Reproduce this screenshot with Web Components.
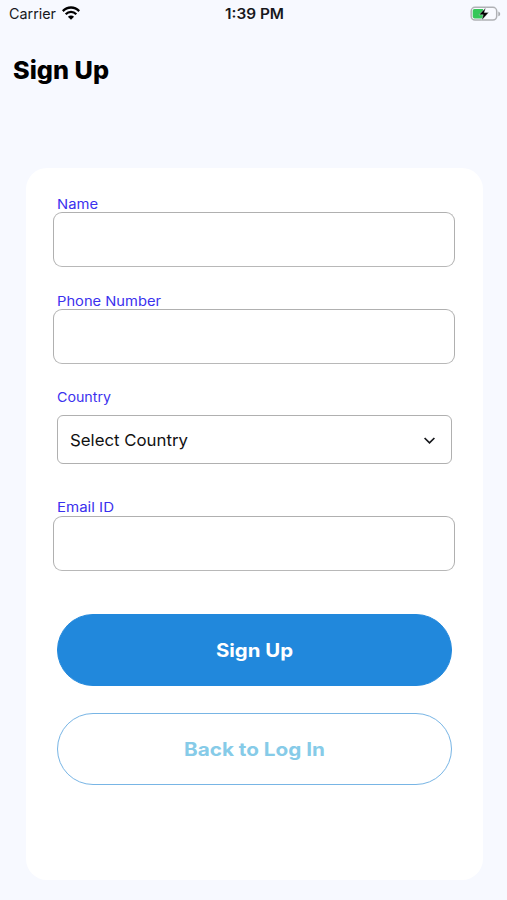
<!DOCTYPE html>
<html lang="en">
<head>
<meta charset="utf-8">
<title>Sign Up</title>
<style>
html, body { margin: 0; height: 100%; background: #f7f9ff; }
body { font-family: Inter, "Liberation Sans", sans-serif; color: #000; }
</style>
</head>
<body>
<signup-screen></signup-screen>
<script>
const define = (name, html, setup) => {
  const template = document.createElement('template');
  template.innerHTML = html;
  customElements.define(name, class extends HTMLElement {
    connectedCallback() {
      if (this.shadowRoot) return;
      this.attachShadow({ mode: 'open' }).append(template.content.cloneNode(true));
      if (setup) setup(this, this.shadowRoot);
    }
  });
};

// A text run stretched to the width given by its attribute.
define('fitted-text', `
<style>
:host { display: block; white-space: nowrap; }
span { display: inline-block; transform-origin: 0 50%; }
</style><span><slot></slot></span>`, (host, root) => {
  const span = root.querySelector('span');
  const target = Number(host.getAttribute('width'));
  host.style.width = target + 'px';
  span.style.transform = `scaleX(${(target / span.getBoundingClientRect().width).toFixed(4)})`;
});

define('status-bar', `
<style>
:host { display: grid; grid-template-columns: 1fr auto 1fr; align-items: center; height: 28px; padding: 0 6px 0 9px; box-sizing: border-box; font-size: 14.5px; line-height: 20px; color: #17181c; }
.left { display: flex; align-items: center; gap: 6px; }
.time { font-weight: 600; margin-left: -2px; }
.wifi { width: 18px; height: 14px; margin-top: -2px; }
.battery { justify-self: end; width: 31px; height: 16px; margin-top: -1px; }
svg { display: block; }
</style>
<div class="left"><fitted-text width="47">Carrier</fitted-text>
<svg class="wifi" viewBox="0 0 18 14"><g fill="none" stroke="#000" stroke-width="2.3"><path d="M.8 5.1C5.5.3 12.5.3 17.2 5.1"/><path d="M3.700 8.200c3-3 7.600-3 10.600 0"/></g><path d="M9 13.700 5.900 10.700c1.700-1.500 4.500-1.500 6.200 0z"/></svg></div>
<fitted-text class="time" width="59">1:39 PM</fitted-text>
<svg class="battery" viewBox="0 0 31 16"><rect x="1.200" y="1.300" width="25.500" height="12.800" rx="3.800" fill="#f9faff" stroke="#b0b1b5" stroke-width="1.500"/><path d="M28.300 5.400c2.500.7 2.500 4.200 0 4.900z" fill="#a9abaf"/><path d="M4.500 3H13v9.400H4.500Q2.700 12.400 2.700 10.600V4.800Q2.700 3 4.500 3z" fill="#35c759"/><path d="M15.700 1.800 9 8.800h4.200l-1.500 5.400 7-7.600h-4.400z" fill="#000" stroke="#f7f9ff" stroke-width=".4"/></svg>`);

define('field-label', `
<style>:host { display: block; height: 16px; font-size: 13px; line-height: 16px; color: #3b31ee; }</style><slot></slot>`);

define('text-box', `
<style>:host { display: block; box-sizing: border-box; height: 55px; margin: 0 -3px 0 -4px; border: 1px solid #b0b0b0; border-bottom-color: #b8b8b8; border-radius: 9px; background: #fff; }</style>`);

define('select-box', `
<style>
:host { display: flex; align-items: center; justify-content: space-between; box-sizing: border-box; height: 49px; border: 1px solid #b0b0b0; border-radius: 6px; padding: 0 15px 0 12px; font-size: 16.500px; line-height: 22px; color: #111; }
svg { display: block; width: 13px; height: 10px; margin-top: 3px; }
</style><slot></slot><svg viewBox="0 0 13 10"><path d="m1.600 2 4.900 4.900L11.400 2" fill="none" stroke="#17181c" stroke-width="1.700"/></svg>`);

define('pill-button', `
<style>
:host { display: flex; align-items: center; justify-content: center; box-sizing: border-box; height: 72px; border: 1px solid #78b5e5; border-radius: 36px; font-size: 18.500px; line-height: 24px; font-weight: 700; color: #86cbe8; }
:host([primary]) { background: #2188dc; border-color: #2188dc; color: #fff; }
</style><slot></slot>`);

define('form-card', `
<style>:host { display: block; box-sizing: border-box; width: 457px; height: 712px; margin: 76px 0 0 26px; padding: 28px 31px 0; border-radius: 21px; background: #fff; }</style><slot></slot>`);

define('signup-screen', `
<style>
:host { display: block; width: 507px; height: 900px; overflow: hidden; background: #f7f9ff; }
h1 { margin: 24px 0 0 13px; height: 40px; line-height: 36px; font-size: 25px; font-weight: 800; }
text-box + field-label { margin-top: 26px; }
text-box + .country { margin-top: 25px; margin-bottom: 10px; }
.email { margin-top: 35px; margin-bottom: 1px; }
.submit { margin-top: 43px; }
.back { margin-top: 27px; }
</style>
<status-bar></status-bar>
<h1><fitted-text width="96">Sign Up</fitted-text></h1>
<form-card>
<field-label><fitted-text width="41">Name</fitted-text></field-label>
<text-box></text-box>
<field-label><fitted-text width="104">Phone Number</fitted-text></field-label>
<text-box></text-box>
<field-label class="country"><fitted-text width="54">Country</fitted-text></field-label>
<select-box><fitted-text width="118">Select Country</fitted-text></select-box>
<field-label class="email"><fitted-text width="57">Email ID</fitted-text></field-label>
<text-box></text-box>
<pill-button primary class="submit"><fitted-text width="77">Sign Up</fitted-text></pill-button>
<pill-button class="back"><fitted-text width="141">Back to Log In</fitted-text></pill-button>
</form-card>`);
</script>
</body>
</html>
